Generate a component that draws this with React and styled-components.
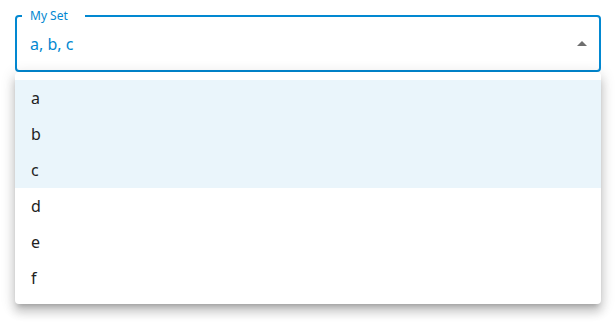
import React from "react";
import styled, { createGlobalStyle } from "styled-components";

const GlobalStyle = createGlobalStyle`
  html, body {
    margin: 0;
    padding: 0;
    background: #ffffff;
  }
  body {
    font-family: "Noto Sans", "Open Sans", sans-serif;
  }
`;

const Page = styled.div`
  width: 616px;
  height: 325px;
  box-sizing: border-box;
  padding: 10px 15px 0 15px;
`;

const Field = styled.fieldset`
  margin: 0;
  height: 62px;
  box-sizing: border-box;
  border: 2px solid #0288d1;
  border-radius: 4px;
  padding: 0 5px 0 13px;
  display: flex;
  align-items: center;
  justify-content: space-between;
`;

const Legend = styled.legend`
  margin-left: -8px;
  padding: 0 17px 0 8px;
  font-size: 12px;
  line-height: 12px;
  color: #0288d1;
`;

const Value = styled.span`
  font-size: 16px;
  color: #0288d1;
  margin-top: -4px;
`;

const Arrow = styled.svg`
  width: 24px;
  height: 24px;
  fill: #6f6f6f;
  margin-top: -4px;
`;

const Menu = styled.ul`
  list-style: none;
  margin: 0;
  padding: 8px 0;
  background: #ffffff;
  border-radius: 4px;
  box-shadow: 0px 5px 5px -3px rgba(0, 0, 0, 0.2),
    0px 8px 10px 1px rgba(0, 0, 0, 0.14), 0px 3px 14px 2px rgba(0, 0, 0, 0.12);
`;

const Item = styled.li`
  height: 36px;
  display: flex;
  align-items: center;
  padding: 0 16px;
  font-size: 16px;
  color: #222222;
  background: ${({ selected }) => (selected ? "#eaf5fb" : "transparent")};
`;

const options = ["a", "b", "c", "d", "e", "f"];
const picked = ["a", "b", "c"];

export default function App() {
  return (
    <>
      <GlobalStyle />
      <Page>
        <Field>
          <Legend>My Set</Legend>
          <Value>{picked.join(", ")}</Value>
          <Arrow viewBox="0 0 24 24">
            <path d="M7 14l5-5 5 5z" />
          </Arrow>
        </Field>
        <Menu>
          {options.map(o => (
            <Item key={o} selected={picked.includes(o)}>
              {o}
            </Item>
          ))}
        </Menu>
      </Page>
    </>
  );
}
